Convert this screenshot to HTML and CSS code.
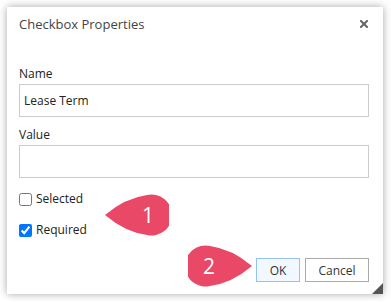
FILE: index.html
```html
<!DOCTYPE html>
<html lang="en">
<head>
  <meta charset="UTF-8" />
  <title>Checkbox Properties</title>
  <link rel="stylesheet" href="styles.css">
</head>
<body>
  <div class="dialog">
    <div class="dialog-header">
      <span class="dialog-title">Checkbox Properties</span>
      <button class="close-btn" title="Close">
        <svg width="8" height="8" viewBox="0 0 8 8"><path d="M1 1 L7 7 M7 1 L1 7" stroke="#666" stroke-width="2" stroke-linecap="square"/></svg>
      </button>
    </div>

    <div class="dialog-body">
      <label class="field-label" for="name">Name</label>
      <input class="text-input" id="name" type="text" value="Lease Term">

      <label class="field-label value-label" for="value">Value</label>
      <input class="text-input" id="value" type="text" value="">

      <label class="check-row first">
        <input type="checkbox"> Selected
      </label>
      <label class="check-row">
        <input type="checkbox" checked> Required
      </label>

      <div class="actions">
        <button class="btn btn-ok">OK</button>
        <button class="btn">Cancel</button>
      </div>
    </div>

    <!-- callout markers -->
    <div class="callout callout-1">
      <svg width="64" height="42" viewBox="0 0 64 42"><path d="M0 21 Q 20 4 42 1 A 20.5 20.5 0 1 1 42 41 Q 20 38 0 21 Z" fill="#e94867"/></svg>
      <span>1</span>
    </div>
    <div class="callout callout-2">
      <svg width="64" height="42" viewBox="0 0 64 42"><path d="M64 21 Q 44 4 22 1 A 20.5 20.5 0 1 0 22 41 Q 44 38 64 21 Z" fill="#e94867"/></svg>
      <span>2</span>
    </div>

    <div class="grip"></div>
  </div>
</body>
</html>
```

FILE: styles.css
```css
body {
  margin: 0;
  background: #fff;
  font-family: 'Open Sans', sans-serif;
  color: #333;
}

.dialog {
  position: relative;
  margin: 7px;
  width: 376px;
  height: 287px;
  background: #fff;
  box-shadow: 0 0 8px rgba(0, 0, 0, 0.35);
  box-sizing: border-box;
}

.dialog-header {
  display: flex;
  align-items: center;
  justify-content: space-between;
  padding: 8px 15px 8px 12px;
  height: 34px;
  box-sizing: border-box;
}

.dialog-title {
  font-size: 13px;
  line-height: 18px;
  color: #444;
}

.close-btn {
  border: none;
  background: none;
  padding: 0;
  width: 8px;
  height: 8px;
  display: flex;
}

.dialog-body {
  padding: 0 14px 0 12px;
  display: flex;
  flex-direction: column;
}

.field-label {
  font-size: 12px;
  line-height: 18px;
  margin-top: 24px;
  margin-bottom: 1px;
  color: #222;
}

.value-label {
  margin-top: 9px;
}

.text-input {
  height: 33px;
  border: 1px solid #ccc;
  padding: 0 4px;
  font-family: 'Open Sans', sans-serif;
  font-size: 12px;
  color: #222;
  box-sizing: border-box;
  outline: none;
}

.check-row {
  display: flex;
  align-items: center;
  font-size: 12px;
  line-height: 18px;
  color: #222;
  margin-top: 13px;
}

.check-row.first {
  margin-top: 12px;
}

.check-row input {
  margin: 0 4px 0 0;
  width: 13px;
  height: 13px;
}

.actions {
  display: flex;
  justify-content: flex-end;
  gap: 5px;
  margin-top: 19px;
}

.btn {
  height: 24px;
  padding: 0;
  width: 64px;
  border: 1px solid #aaa;
  background: #fff;
  font-family: 'Open Sans', sans-serif;
  font-size: 12px;
  color: #333;
}

.btn-ok {
  width: 44px;
  background: #f2f8ff;
  border-color: #93c2f3;
}

.callout {
  position: absolute;
  width: 64px;
  height: 42px;
}

.callout svg {
  display: block;
}

.callout span {
  position: absolute;
  top: 0;
  width: 40px;
  line-height: 42px;
  text-align: center;
  color: #fff;
  font-family: 'Open Sans', sans-serif;
  font-size: 21px;
}

.callout-1 {
  left: 98px;
  top: 187px;
}

.callout-1 span {
  left: 23px;
}

.callout-2 {
  left: 181px;
  top: 238px;
}

.callout-2 span {
  left: 1px;
}

.grip {
  position: absolute;
  right: 0;
  bottom: 0;
  width: 0;
  height: 0;
  border-left: 11px solid transparent;
  border-bottom: 11px solid #555;
}
```
